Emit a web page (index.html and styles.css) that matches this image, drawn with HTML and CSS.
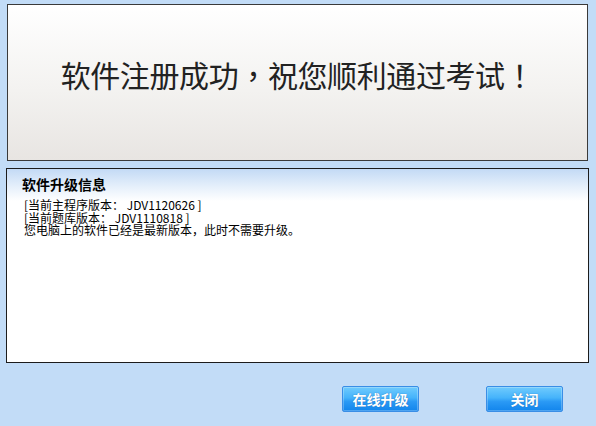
FILE: index.html
```html
<!DOCTYPE html>
<html lang="zh-CN">
<head>
<meta charset="utf-8">
<title>软件注册</title>
<link rel="stylesheet" href="styles.css">
</head>
<body>
<div class="window">
  <div class="banner">
    <div class="banner-text">软件注册成功<span class="punct" lang="zh-TW">，</span>祝您顺利通过考试<span class="punct" lang="zh-TW">！</span></div>
  </div>
  <div class="info">
    <div class="info-title">软件升级信息</div>
    <div class="info-body">
      <div class="line">[当前主程序版本： JDV1120626 ]</div>
      <div class="line">[当前题库版本： JDV1110818 ]</div>
      <div class="line">您电脑上的软件已经是最新版本，此时不需要升级。</div>
    </div>
  </div>
  <div class="actions">
    <button class="btn">在线升级</button>
    <button class="btn">关闭</button>
  </div>
</div>
</body>
</html>
```

FILE: styles.css
```css
html, body {
  margin: 0;
  padding: 0;
}
body {
  width: 596px;
  height: 426px;
  background: #c2dcf7;
  font-family: "Noto Sans CJK SC", "Noto Sans", sans-serif;
  overflow: hidden;
}
.window {
  display: flex;
  flex-direction: column;
  padding-top: 4px;
}
.banner {
  box-sizing: border-box;
  margin-left: 7px;
  width: 581px;
  height: 157px;
  border: 1px solid #3a3a3a;
  background: linear-gradient(#ffffff, #f3f2f0 55%, #e8e5e2);
  padding-top: 54px;
  display: flex;
  justify-content: center;
}
.banner-text {
  font-size: 30px;
  line-height: 30px;
  letter-spacing: -0.4px;
  color: #222;
  white-space: nowrap;
  text-spacing-trim: space-all;
}
.punct {
  font-family: "Noto Sans CJK TC", "Noto Sans CJK SC", sans-serif;
  font-feature-settings: "locl" 0, "halt" 0, "chws" 0;
}
.info {
  box-sizing: border-box;
  margin-top: 7px;
  margin-left: 6px;
  width: 583px;
  height: 195px;
  border: 1px solid #1c1c1c;
  background: linear-gradient(#c3daf5, #e6f0fb 18px, #ffffff 32px);
  padding: 7px 0 0 15px;
}
.info-title {
  font-size: 14px;
  line-height: 16px;
  font-weight: bold;
  color: #000;
}
.info-body {
  margin-top: 7px;
  padding-left: 2px;
}
.line {
  font-size: 12px;
  line-height: 12.5px;
  color: #000;
  white-space: nowrap;
}
.actions {
  display: flex;
  justify-content: flex-end;
  gap: 67px;
  margin-top: 23px;
  padding-right: 33px;
}
.btn {
  box-sizing: border-box;
  width: 77px;
  height: 26px;
  border: 1px solid #3a8ee6;
  border-radius: 2px;
  background: linear-gradient(#70cbfd, #45b3fb 45%, #2b9af5 60%, #1285ec);
  color: #fff;
  font-family: "Noto Sans CJK SC", sans-serif;
  font-size: 14px;
  font-weight: bold;
  line-height: 24px;
  padding: 0;
  text-shadow: 0 0 1px #1a5fa8;
  box-shadow: inset 0 0 0 1px rgba(255, 255, 255, 0.25);
  cursor: pointer;
}
```
